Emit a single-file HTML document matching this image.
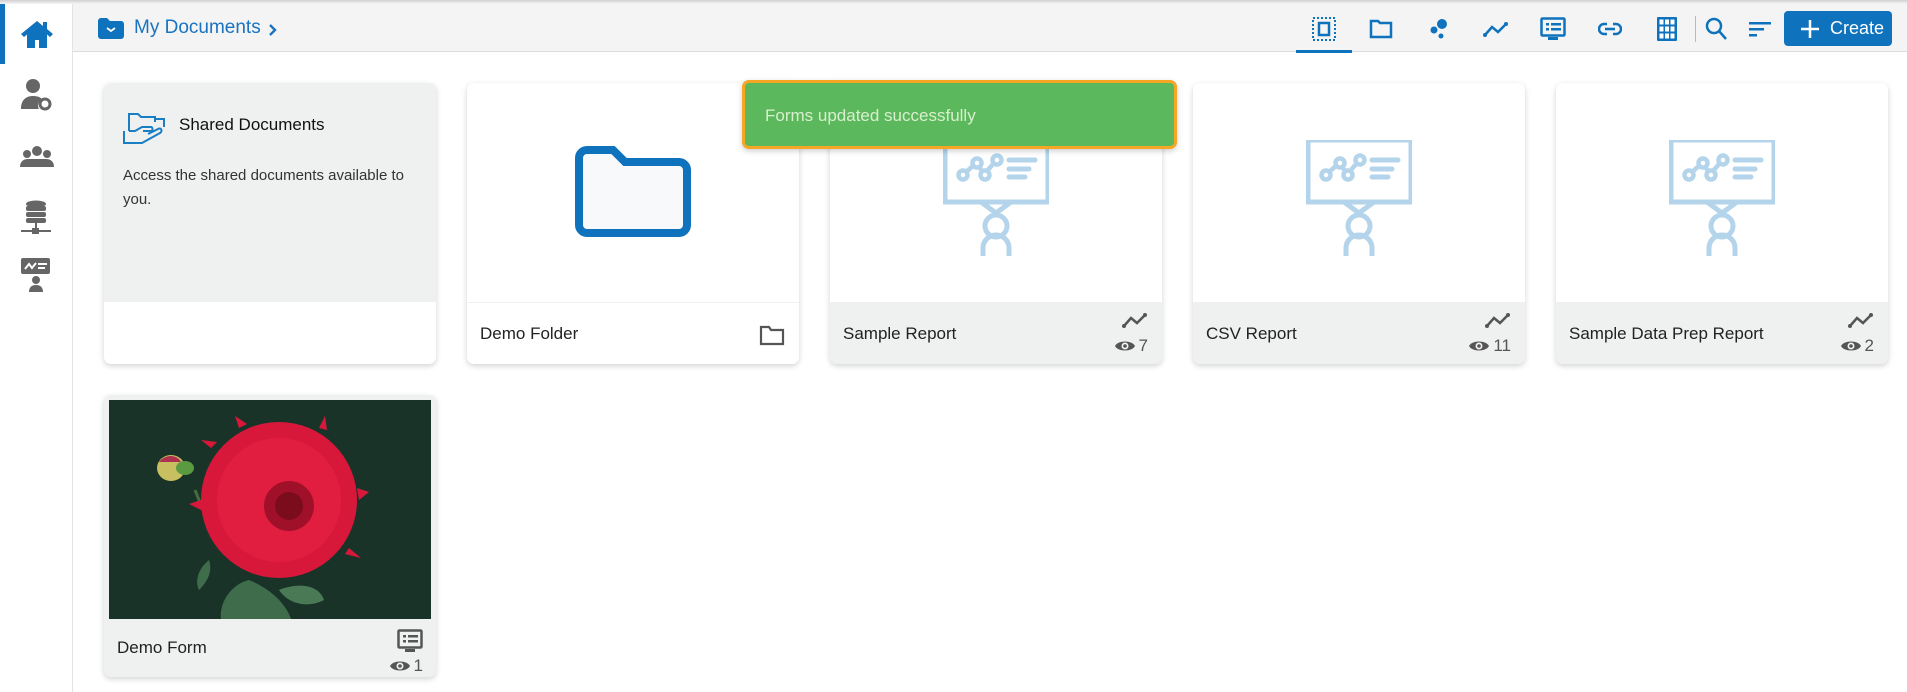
<!DOCTYPE html>
<html><head><meta charset="utf-8"><style>
*{box-sizing:border-box;margin:0;padding:0}
body{width:1907px;height:692px;overflow:hidden;background:#fff;font-family:"Liberation Sans",sans-serif;position:relative;color:#222}
.topline{position:absolute;left:0;top:0;width:1907px;height:4px;background:linear-gradient(#d0d0d0,#f4f4f4)}
.side{position:absolute;left:0;top:4px;width:73px;height:688px;background:#fff;border-right:1px solid #e3e3e3}
.side .act{position:absolute;left:0;top:0;width:5px;height:60px;background:#0f72bd}
.hdr{position:absolute;left:73px;top:4px;width:1834px;height:48px;background:#f4f4f4;border-bottom:1px solid #dcdcdc}
.crumb{position:absolute;left:61px;top:13px;font-size:19px;color:#1a73c0}
.card{position:absolute;width:332px;height:281px;border-radius:7px;background:#fff;box-shadow:0 2px 6px rgba(0,0,0,.18);overflow:hidden}
.card .img{position:absolute;left:0;top:0;width:332px;height:219px;background:#fff}
.card .ft{position:absolute;left:0;top:219px;width:332px;height:62px;background:#eff0f0}
.card .ttl{position:absolute;left:13px;top:22px;font-size:17px;color:#222}
.card .r2{position:absolute;right:14px;top:34px;font-size:17px;color:#555;display:flex;align-items:center;gap:4px}
.toast{position:absolute;left:742px;top:80px;width:435px;height:69px;background:#5cb85c;border:3px solid #f5a623;border-radius:7px;box-shadow:0 2px 6px rgba(0,0,0,.2)}
.toast span{position:absolute;left:20px;top:23px;font-size:17px;color:#d8efcf}
.create{position:absolute;left:1784px;top:11px;width:108px;height:35px;background:#0f72bd;border-radius:4px;color:#fff;font-size:18px}
</style></head><body>
<div class="topline"></div>
<div class="side">
 <div class="act"></div>
 <svg style="position:absolute;left:20px;top:15px" width="34" height="30" viewBox="0 0 34 30"><path d="M17 2L1 15l3 3 3-2.5V29h8v-8h4v8h8V15.5l3 2.5 3-3-6-5V3h-4v4z" fill="#0f72bd"/></svg>
 <svg style="position:absolute;left:20px;top:74px" width="32" height="34" viewBox="0 0 32 34"><circle cx="13" cy="8" r="7" fill="#666"/><path d="M1 31c0-9 5-13 12-13 4 0 7 1 9 3-4 2-5 7-3 10z" fill="#666"/><circle cx="25" cy="26" r="5" fill="none" stroke="#666" stroke-width="3"/></svg>
 <svg style="position:absolute;left:20px;top:141px" width="34" height="24" viewBox="0 0 34 24"><circle cx="17" cy="6" r="5" fill="#666"/><circle cx="7" cy="9" r="4" fill="#666"/><circle cx="27" cy="9" r="4" fill="#666"/><path d="M0 22c0-6 4-8 8-8h18c4 0 8 2 8 8z" fill="#666"/></svg>
 <svg style="position:absolute;left:20px;top:196px" width="32" height="36" viewBox="0 0 32 36"><ellipse cx="16" cy="4" rx="10" ry="3.5" fill="#666"/><rect x="6" y="6" width="20" height="5" rx="2" fill="#666"/><rect x="6" y="12" width="20" height="5" rx="2" fill="#666"/><rect x="6" y="18" width="20" height="5" rx="2" fill="#666"/><rect x="15" y="23" width="2" height="6" fill="#666"/><rect x="1" y="30" width="30" height="2" fill="#666"/><rect x="12" y="28" width="7" height="6" fill="#666"/></svg>
 <svg style="position:absolute;left:20px;top:253px" width="32" height="36" viewBox="0 0 32 36"><rect x="1" y="1" width="29" height="16" rx="2" fill="#666"/><path d="M5 12l4-5 3 4 4-5" stroke="#fff" stroke-width="2" fill="none"/><rect x="18" y="6" width="9" height="2" fill="#fff"/><rect x="18" y="10" width="7" height="2" fill="#fff"/><circle cx="16" cy="23" r="4" fill="#666"/><path d="M9 35c0-5 3-7 7-7s7 2 7 7z" fill="#666"/></svg>
</div>
<div class="hdr">
 <svg style="position:absolute;left:25px;top:14px" width="26" height="21" viewBox="0 0 26 21"><path d="M0 3a3 3 0 0 1 3-3h6l3 3h11a3 3 0 0 1 3 3v12a3 3 0 0 1-3 3H3a3 3 0 0 1-3-3z" fill="#0f72bd"/><path d="M9 10l4 3 4-3" stroke="#fff" stroke-width="1.8" fill="none"/></svg>
 <div class="crumb">My Documents</div>
 <svg style="position:absolute;left:195px;top:19px" width="10" height="14" viewBox="0 0 10 14"><path d="M2 2l5 5-5 5" stroke="#1a73c0" stroke-width="2.4" fill="none"/></svg>
</div>
<!-- header right icons -->
<svg style="position:absolute;left:1311px;top:17px" width="26" height="24" viewBox="0 0 26 24"><rect x="2" y="1" width="22" height="22" fill="none" stroke="#0f72bd" stroke-width="2" stroke-dasharray="2 2"/><rect x="8" y="6" width="10" height="12" fill="none" stroke="#0f72bd" stroke-width="2.5"/></svg>
<div style="position:absolute;left:1296px;top:50px;width:56px;height:3px;background:#0f72bd"></div>
<svg style="position:absolute;left:1369px;top:19px" width="24" height="20" viewBox="0 0 24 20"><path d="M2 2h7l2 2h11v14H2z" fill="none" stroke="#0f72bd" stroke-width="2.5"/></svg>
<svg style="position:absolute;left:1429px;top:17px" width="20" height="24" viewBox="0 0 20 24"><circle cx="13" cy="7" r="5" fill="#0f72bd"/><circle cx="5" cy="13" r="3.5" fill="#0f72bd"/><circle cx="12" cy="19" r="2.5" fill="#0f72bd"/></svg>
<svg style="position:absolute;left:1483px;top:21px" width="26" height="16" viewBox="0 0 26 16"><path d="M2 14l7-8 6 5 8-8" stroke="#0f72bd" stroke-width="2.5" fill="none"/><circle cx="2" cy="14" r="2" fill="#0f72bd"/><circle cx="23" cy="3" r="2" fill="#0f72bd"/></svg>
<svg style="position:absolute;left:1540px;top:17px" width="26" height="24" viewBox="0 0 26 24"><rect x="1.5" y="1.5" width="23" height="17" rx="1" fill="none" stroke="#0f72bd" stroke-width="2.5"/><rect x="6" y="6" width="3" height="2.5" fill="#0f72bd"/><rect x="11" y="6" width="10" height="2.5" fill="#0f72bd"/><rect x="6" y="11" width="3" height="2.5" fill="#0f72bd"/><rect x="11" y="11" width="10" height="2.5" fill="#0f72bd"/><rect x="8" y="20" width="10" height="3" fill="#0f72bd"/></svg>
<svg style="position:absolute;left:1598px;top:21px" width="24" height="16" viewBox="0 0 24 16"><path d="M9 3H6a5 5 0 0 0 0 10h3M15 3h3a5 5 0 0 1 0 10h-3M7 8h10" stroke="#0f72bd" stroke-width="2.5" fill="none"/></svg>
<svg style="position:absolute;left:1656px;top:16px" width="22" height="26" viewBox="0 0 22 26"><rect x="1" y="1" width="20" height="24" rx="1" fill="#0f72bd"/><g fill="#fff"><rect x="3.5" y="3.5" width="4" height="5"/><rect x="9" y="3.5" width="4" height="5"/><rect x="14.5" y="3.5" width="4" height="5"/><rect x="3.5" y="10.5" width="4" height="5"/><rect x="9" y="10.5" width="4" height="5"/><rect x="14.5" y="10.5" width="4" height="5"/><rect x="3.5" y="17.5" width="4" height="5"/><rect x="9" y="17.5" width="4" height="5"/><rect x="14.5" y="17.5" width="4" height="5"/></g></svg>
<div style="position:absolute;left:1695px;top:16px;width:1px;height:26px;background:#bbb"></div>
<svg style="position:absolute;left:1705px;top:17px" width="22" height="24" viewBox="0 0 22 24"><circle cx="9" cy="9" r="7" fill="none" stroke="#0f72bd" stroke-width="2.5"/><path d="M14 14l7 8" stroke="#0f72bd" stroke-width="2.5"/></svg>
<svg style="position:absolute;left:1748px;top:19px" width="24" height="20" viewBox="0 0 24 20"><rect x="1" y="3" width="22" height="2.5" fill="#0f72bd"/><rect x="1" y="9" width="15" height="2.5" fill="#0f72bd"/><rect x="1" y="15" width="8" height="2.5" fill="#0f72bd"/></svg>
<div class="create"><svg style="position:absolute;left:16px;top:8px" width="20" height="20" viewBox="0 0 20 20"><path d="M10 1v18M1 10h18" stroke="#fff" stroke-width="2.5"/></svg><span style="position:absolute;left:46px;top:7px">Create</span></div>

<!-- cards row 1 -->
<div class="card" style="left:104px;top:83px;background:#fff">
 <div class="img" style="background:#eff0f0"></div>
 <svg style="position:absolute;left:19px;top:28px" width="46" height="33" viewBox="0 0 46 33"><path d="M6 20V3h9l3 3h14v5M6 20h6l7-4h9c2 0 2 4 0 4h-8M1 20v12h18l18-10c3-2 1-6-2-4l-10 5" fill="none" stroke="#1a7ec4" stroke-width="2"/><path d="M32 8h9v8" fill="none" stroke="#1a7ec4" stroke-width="2"/></svg>
 <div style="position:absolute;left:75px;top:32px;font-size:17px;color:#111">Shared Documents</div>
 <div style="position:absolute;left:19px;top:81px;width:290px;font-size:15px;line-height:24px;color:#333">Access the shared documents available to you.</div>
</div>
<div class="card" style="left:467px;top:83px">
 <svg style="position:absolute;left:107px;top:63px" width="120" height="91" viewBox="0 0 120 91"><path d="M5 12a8 8 0 0 1 8-8h26l12 12h54a8 8 0 0 1 8 8v55a8 8 0 0 1-8 8H13a8 8 0 0 1-8-8z" fill="#f8f9fa" stroke="#0f72bd" stroke-width="8"/></svg>
 <div class="ft" style="background:#fff;border-top:1px solid #f0f0f0"></div>
 <div class="ttl" style="top:241px">Demo Folder</div>
 <svg style="position:absolute;right:14px;top:241px" width="26" height="22" viewBox="0 0 26 22"><path d="M2 3h8l2 3h12v14H2z" fill="none" stroke="#555" stroke-width="2.2"/></svg>
</div>
<div class="card" style="left:830px;top:83px">
 <svg style="position:absolute;left:113px;top:57px" width="106" height="116" viewBox="0 0 106 116"><path d="M2 0v62h103V0" fill="none" stroke="#b3d4ea" stroke-width="5"/><path d="M38 62l15 11 15-11" fill="none" stroke="#b3d4ea" stroke-width="5"/><g fill="none" stroke="#b3d4ea" stroke-width="4.5"><circle cx="20" cy="35" r="4.5"/><circle cx="34" cy="23" r="4.5"/><circle cx="42" cy="35" r="4.5"/><circle cx="54" cy="20" r="4.5"/><path d="M23 32l8-7M36 27l4 5M44 31l7-8"/></g><path d="M66 20h26M66 29h20M66 37h16" stroke="#b3d4ea" stroke-width="5" stroke-linecap="round"/><circle cx="53" cy="86" r="11" fill="none" stroke="#b3d4ea" stroke-width="5"/><path d="M40 116v-8a13 13 0 0 1 26 0v8" fill="none" stroke="#b3d4ea" stroke-width="5"/></svg>
 <div class="ft"></div><div class="ttl" style="top:241px">Sample Report</div>
 <svg style="position:absolute;right:14px;top:229px" width="26" height="16" viewBox="0 0 26 16"><path d="M2 14l7-8 6 5 8-8" stroke="#555" stroke-width="2.5" fill="none"/><circle cx="2" cy="14" r="2" fill="#555"/><circle cx="23" cy="3" r="2" fill="#555"/></svg>
 <div class="r2" style="top:253px"><svg width="20" height="14" viewBox="0 0 20 14"><path d="M0 7C3 1 17 1 20 7 17 13 3 13 0 7z" fill="#555"/><circle cx="10" cy="7" r="3.5" fill="#eff0f0"/><circle cx="10" cy="7" r="1.8" fill="#555"/></svg>7</div>
</div>
<div class="card" style="left:1193px;top:83px">
 <svg style="position:absolute;left:113px;top:57px" width="106" height="116" viewBox="0 0 106 116"><path d="M2 0v62h103V0H2" fill="none" stroke="#b3d4ea" stroke-width="5"/><path d="M38 62l15 11 15-11" fill="none" stroke="#b3d4ea" stroke-width="5"/><g fill="none" stroke="#b3d4ea" stroke-width="4.5"><circle cx="20" cy="35" r="4.5"/><circle cx="34" cy="23" r="4.5"/><circle cx="42" cy="35" r="4.5"/><circle cx="54" cy="20" r="4.5"/><path d="M23 32l8-7M36 27l4 5M44 31l7-8"/></g><path d="M66 20h26M66 29h20M66 37h16" stroke="#b3d4ea" stroke-width="5" stroke-linecap="round"/><circle cx="53" cy="86" r="11" fill="none" stroke="#b3d4ea" stroke-width="5"/><path d="M40 116v-8a13 13 0 0 1 26 0v8" fill="none" stroke="#b3d4ea" stroke-width="5"/></svg>
 <div class="ft"></div><div class="ttl" style="top:241px">CSV Report</div>
 <svg style="position:absolute;right:14px;top:229px" width="26" height="16" viewBox="0 0 26 16"><path d="M2 14l7-8 6 5 8-8" stroke="#555" stroke-width="2.5" fill="none"/><circle cx="2" cy="14" r="2" fill="#555"/><circle cx="23" cy="3" r="2" fill="#555"/></svg>
 <div class="r2" style="top:253px"><svg width="20" height="14" viewBox="0 0 20 14"><path d="M0 7C3 1 17 1 20 7 17 13 3 13 0 7z" fill="#555"/><circle cx="10" cy="7" r="3.5" fill="#eff0f0"/><circle cx="10" cy="7" r="1.8" fill="#555"/></svg>11</div>
</div>
<div class="card" style="left:1556px;top:83px">
 <svg style="position:absolute;left:113px;top:57px" width="106" height="116" viewBox="0 0 106 116"><path d="M2 0v62h103V0H2" fill="none" stroke="#b3d4ea" stroke-width="5"/><path d="M38 62l15 11 15-11" fill="none" stroke="#b3d4ea" stroke-width="5"/><g fill="none" stroke="#b3d4ea" stroke-width="4.5"><circle cx="20" cy="35" r="4.5"/><circle cx="34" cy="23" r="4.5"/><circle cx="42" cy="35" r="4.5"/><circle cx="54" cy="20" r="4.5"/><path d="M23 32l8-7M36 27l4 5M44 31l7-8"/></g><path d="M66 20h26M66 29h20M66 37h16" stroke="#b3d4ea" stroke-width="5" stroke-linecap="round"/><circle cx="53" cy="86" r="11" fill="none" stroke="#b3d4ea" stroke-width="5"/><path d="M40 116v-8a13 13 0 0 1 26 0v8" fill="none" stroke="#b3d4ea" stroke-width="5"/></svg>
 <div class="ft"></div><div class="ttl" style="top:241px">Sample Data Prep Report</div>
 <svg style="position:absolute;right:14px;top:229px" width="26" height="16" viewBox="0 0 26 16"><path d="M2 14l7-8 6 5 8-8" stroke="#555" stroke-width="2.5" fill="none"/><circle cx="2" cy="14" r="2" fill="#555"/><circle cx="23" cy="3" r="2" fill="#555"/></svg>
 <div class="r2" style="top:253px"><svg width="20" height="14" viewBox="0 0 20 14"><path d="M0 7C3 1 17 1 20 7 17 13 3 13 0 7z" fill="#555"/><circle cx="10" cy="7" r="3.5" fill="#eff0f0"/><circle cx="10" cy="7" r="1.8" fill="#555"/></svg>2</div>
</div>
<!-- row 2 -->
<div class="card" style="left:104px;top:395px;height:282px;background:#eff0f0">
 <svg style="position:absolute;left:5px;top:5px" width="322" height="219" viewBox="0 0 322 219"><rect width="322" height="219" fill="#1a3328"/>
 <path d="M140 180c-20 5-30 25-28 39h70c-5-15-20-30-42-39z" fill="#3f6d4c"/><path d="M100 160c-12 10-14 22-10 30 8-8 14-18 10-30z" fill="#3f6d4c"/><path d="M170 190c20-8 40-5 45 10-15 8-35 5-45-10z" fill="#4a7a55"/>
 <path d="M86 90l8 20" stroke="#4a6b3a" stroke-width="3"/>
 <ellipse cx="62" cy="68" rx="14" ry="13" fill="#c8c060"/><path d="M50 62c6-8 18-8 22 0" fill="#b03050"/><ellipse cx="76" cy="68" rx="9" ry="7" fill="#5a9a40"/>
 <circle cx="170" cy="100" r="78" fill="#d8183a"/><circle cx="170" cy="100" r="62" fill="#e21e40"/><circle cx="180" cy="106" r="25" fill="#a01028"/><circle cx="180" cy="106" r="14" fill="#7a0c1c"/>
 <path d="M92 100l-12 4 12 6M102 48l-10-8 16 2M248 88l12 4-10 8M240 148l12 10-16-4M130 28l-4-12 12 8M210 28l6-12 2 14" fill="#d8183a"/>
 </svg>
 <div class="ttl" style="top:243px;left:13px">Demo Form</div>
 <svg style="position:absolute;right:12px;top:234px" width="28" height="24" viewBox="0 0 26 24"><rect x="1.5" y="1.5" width="23" height="17" rx="1" fill="none" stroke="#555" stroke-width="2.5"/><rect x="6" y="6" width="3" height="2.5" fill="#555"/><rect x="11" y="6" width="10" height="2.5" fill="#555"/><rect x="6" y="11" width="3" height="2.5" fill="#555"/><rect x="11" y="11" width="10" height="2.5" fill="#555"/><rect x="8" y="20" width="10" height="3" fill="#555"/></svg>
 <div class="r2" style="top:261px;right:13px"><svg width="20" height="14" viewBox="0 0 20 14"><path d="M0 7C3 1 17 1 20 7 17 13 3 13 0 7z" fill="#555"/><circle cx="10" cy="7" r="3.5" fill="#eff0f0"/><circle cx="10" cy="7" r="1.8" fill="#555"/></svg>1</div>
</div>
<div class="toast"><span>Forms updated successfully</span></div>
</body></html>
